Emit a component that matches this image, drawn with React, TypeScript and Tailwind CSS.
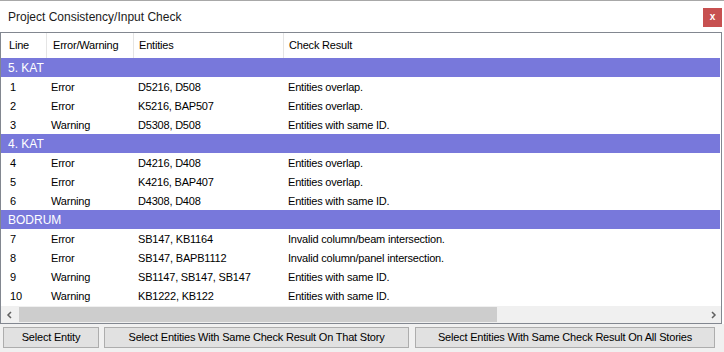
const groups = [
  {
    name: '5. KAT',
    rows: [
      { line: '1', type: 'Error', entities: 'D5216, D508', result: 'Entities overlap.' },
      { line: '2', type: 'Error', entities: 'K5216, BAP507', result: 'Entities overlap.' },
      { line: '3', type: 'Warning', entities: 'D5308, D508', result: 'Entities with same ID.' },
    ],
  },
  {
    name: '4. KAT',
    rows: [
      { line: '4', type: 'Error', entities: 'D4216, D408', result: 'Entities overlap.' },
      { line: '5', type: 'Error', entities: 'K4216, BAP407', result: 'Entities overlap.' },
      { line: '6', type: 'Warning', entities: 'D4308, D408', result: 'Entities with same ID.' },
    ],
  },
  {
    name: 'BODRUM',
    rows: [
      { line: '7', type: 'Error', entities: 'SB147, KB1164', result: 'Invalid column/beam intersection.' },
      { line: '8', type: 'Error', entities: 'SB147, BAPB1112', result: 'Invalid column/panel intersection.' },
      { line: '9', type: 'Warning', entities: 'SB1147, SB147, SB147', result: 'Entities with same ID.' },
      { line: '10', type: 'Warning', entities: 'KB1222, KB122', result: 'Entities with same ID.' },
    ],
  },
]

function Button({ label, className }: { label: string; className: string }) {
  return (
    <button
      className={`h-[21px] border border-[#adadad] bg-[#e1e1e1] text-[11px] tracking-[-0.2px] text-black ${className}`}
    >
      {label}
    </button>
  )
}

export default function App() {
  return (
    <div
      className="w-[724px] h-[352px] bg-white flex flex-col overflow-hidden"
      style={{ fontFamily: '"Liberation Sans", Arial, sans-serif' }}
    >
      <div className="h-px bg-[#a8a8a8]" />

      {/* Title bar */}
      <div className="h-[31px] flex items-center justify-between pl-2 pr-[2px]">
        <span className="text-[12px] text-[#1a1a1a] pt-[1px]">
          Project Consistency/Input Check
        </span>
        <div className="w-[19px] h-[19px] bg-[#c75050] flex items-center justify-center mt-[2px]">
          <span className="text-white text-[10px] font-bold leading-none pb-[2px]">x</span>
        </div>
      </div>

      {/* List */}
      <div className="mr-[2px] border border-[#828790] flex flex-col h-[292px]">
        <div className="h-[25px] flex text-[11px] tracking-[-0.2px] text-black items-center shrink-0">
          <div className="w-[46px] pl-[8px] border-r border-[#e5e5e5] h-full flex items-center">Line</div>
          <div className="w-[87px] pl-[6px] border-r border-[#e5e5e5] h-full flex items-center">Error/Warning</div>
          <div className="w-[150px] pl-[5px] border-r border-[#e5e5e5] h-full flex items-center">Entities</div>
          <div className="flex-1 pl-[5px] h-full flex items-center">Check Result</div>
        </div>

        <div className="flex-1 flex flex-col pr-[1px]">
          {groups.map((g) => (
            <div key={g.name} className="flex flex-col">
              <div className="h-[19px] bg-[#7878db] text-white text-[12px] pl-[7px] pt-[1px] flex items-center">
                {g.name}
              </div>
              {g.rows.map((r) => (
                <div key={r.line} className="h-[19px] pt-[2px] flex items-center text-[11px] tracking-[-0.2px] text-black">
                  <div className="w-[46px] pl-[9px]">{r.line}</div>
                  <div className="w-[91px] pl-[4px]">{r.type}</div>
                  <div className="w-[150px]">{r.entities}</div>
                  <div className="flex-1">{r.result}</div>
                </div>
              ))}
            </div>
          ))}
        </div>

        {/* Horizontal scrollbar */}
        <div className="h-[17px] bg-[#f0f0f0] flex items-center shrink-0">
          <div className="w-[17px] h-full flex items-center justify-center">
            <svg width="8" height="8" viewBox="0 0 8 8">
              <path d="M5 1 L2 4 L5 7" fill="none" stroke="#606060" strokeWidth="1.5" />
            </svg>
          </div>
          <div className="flex-1 h-full flex items-center">
            <div className="w-[478px] h-[15px] bg-[#cdcdcd] ml-[1px]" />
          </div>
          <div className="w-[17px] h-full flex items-center justify-center">
            <svg width="8" height="8" viewBox="0 0 8 8">
              <path d="M3 1 L6 4 L3 7" fill="none" stroke="#606060" strokeWidth="1.5" />
            </svg>
          </div>
        </div>
      </div>

      {/* Buttons */}
      <div className="flex-1 bg-[#f0f0f0] flex items-start pt-[3px] pl-[3px]">
        <Button label="Select Entity" className="w-[96px]" />
        <Button label="Select Entities With Same Check Result On That Story" className="w-[305px] ml-[5px]" />
        <Button label="Select Entities With Same Check Result On All Stories" className="w-[300px] ml-[6px]" />
      </div>
    </div>
  )
}
